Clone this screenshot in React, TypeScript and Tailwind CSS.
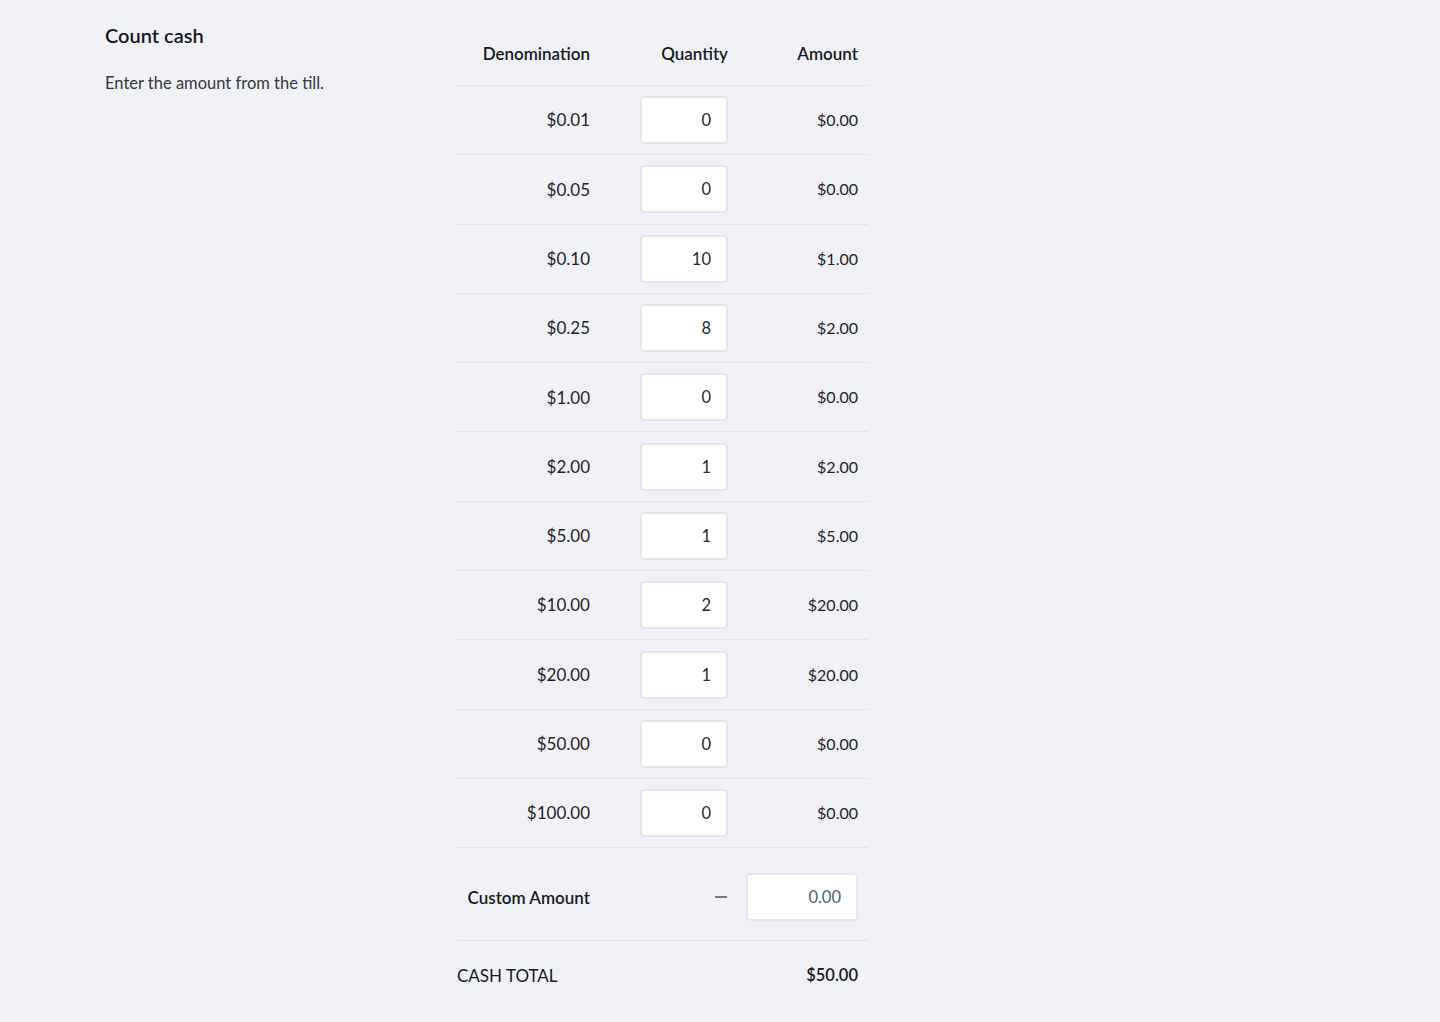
const rows = [
    { denom: '$0.01', qty: '0', amount: '$0.00' },
    { denom: '$0.05', qty: '0', amount: '$0.00' },
    { denom: '$0.10', qty: '10', amount: '$1.00' },
    { denom: '$0.25', qty: '8', amount: '$2.00' },
    { denom: '$1.00', qty: '0', amount: '$0.00' },
    { denom: '$2.00', qty: '1', amount: '$2.00' },
    { denom: '$5.00', qty: '1', amount: '$5.00' },
    { denom: '$10.00', qty: '2', amount: '$20.00' },
    { denom: '$20.00', qty: '1', amount: '$20.00' },
    { denom: '$50.00', qty: '0', amount: '$0.00' },
    { denom: '$100.00', qty: '0', amount: '$0.00' },
];

function App() {
    return (
        <div className="min-h-[1022px] bg-[#f0f1f6] font-['Lato','Liberation_Sans',sans-serif] text-[#1f2328]">
            <div className="flex pl-[105px]">
                <div className="w-[352px] pt-[23px]">
                    <h2 className="text-[20px] leading-[24px] font-semibold text-[#16191d]">Count cash</h2>
                    <p className="mt-[26px] text-[16.5px] leading-[20px] text-[#33373d]">Enter the amount from the till.</p>
                </div>

                <div className="w-[411px]">
                    <div className="grid grid-cols-[143px_137px_131px] h-[86px] items-center border-b border-[#e2e3e9] text-[17px] font-semibold text-[#16191d] pt-[22px]">
                        <div className="text-right pr-[10px]">Denomination</div>
                        <div className="text-right pr-[9px]">Quantity</div>
                        <div className="text-right pr-[10px]">Amount</div>
                    </div>

                    {rows.map((row) => (
                        <div key={row.denom} className="grid grid-cols-[143px_137px_131px] h-[69.3px] items-center border-b border-[#e2e3e9] text-[17px]">
                            <div className="text-right pr-[10px]">{row.denom}</div>
                            <div className="flex justify-end pr-[9px]">
                                <input
                                    readOnly
                                    value={row.qty}
                                    className="w-[88px] h-[48px] bg-white border-2 border-[#e6e7ed] rounded-[4px] text-right pr-[15px] text-[16.5px] text-[#26292e] outline-none"
                                />
                            </div>
                            <div className="text-right pr-[10px] text-[16px]">{row.amount}</div>
                        </div>
                    ))}

                    <div className="grid grid-cols-[143px_137px_131px] h-[93px] items-center border-b border-[#e2e3e9] text-[17px] pt-[6px]">
                        <div className="text-right pr-[10px] font-semibold text-[#16191d]">Custom Amount</div>
                        <div className="flex justify-end pr-[10px]">
                            <span className="w-[12px] h-[2px] bg-[#75787e]"></span>
                        </div>
                        <div className="flex justify-end pr-[10px]">
                            <input
                                readOnly
                                value="0.00"
                                className="w-[112px] h-[48px] bg-white border-2 border-[#e6e7ed] rounded-[4px] text-right pr-[15px] text-[16.5px] text-[#4a6283] outline-none"
                            />
                        </div>
                    </div>

                    <div className="flex items-center justify-between h-[68px] text-[17px] text-[#16191d]">
                        <div className="uppercase">Cash Total</div>
                        <div className="pr-[10px] font-semibold text-[16.5px]">$50.00</div>
                    </div>
                </div>
            </div>
        </div>
    );
}

export default App;
